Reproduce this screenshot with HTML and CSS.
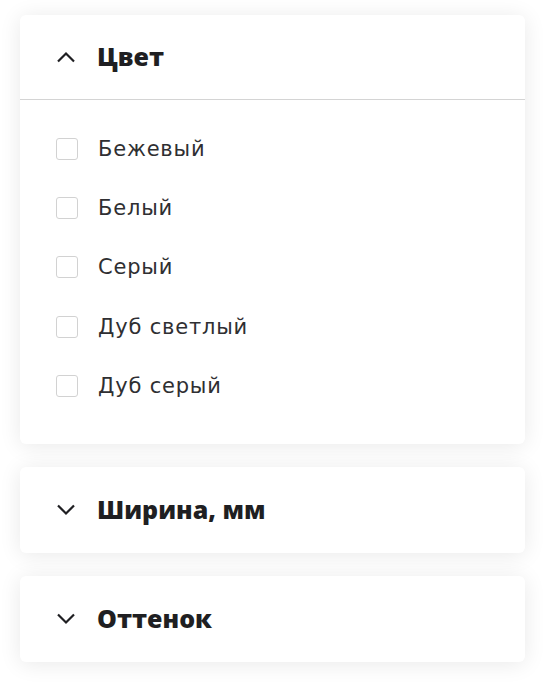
FILE: index.html
```html
<!DOCTYPE html>
<html lang="ru">
<head>
<meta charset="utf-8">
<link rel="stylesheet" href="styles.css">
</head>
<body>
<div class="filters">
  <section class="card">
    <div class="card-head open">
      <svg class="chev" width="20" height="12" viewBox="0 0 20 12"><path d="M2 10.5 L10 2.5 L18 10.5" fill="none" stroke="#1f1f22" stroke-width="2.2"/></svg>
      <h2 class="title">Цвет</h2>
    </div>
    <ul class="options">
      <li class="option"><span class="box"></span><span class="label">Бежевый</span></li>
      <li class="option"><span class="box"></span><span class="label">Белый</span></li>
      <li class="option"><span class="box"></span><span class="label">Серый</span></li>
      <li class="option"><span class="box"></span><span class="label">Дуб светлый</span></li>
      <li class="option"><span class="box"></span><span class="label">Дуб серый</span></li>
    </ul>
  </section>
  <section class="card">
    <div class="card-head">
      <svg class="chev" width="20" height="12" viewBox="0 0 20 12"><path d="M2 1.5 L10 9.5 L18 1.5" fill="none" stroke="#1f1f22" stroke-width="2.2"/></svg>
      <h2 class="title">Ширина, мм</h2>
    </div>
  </section>
  <section class="card">
    <div class="card-head">
      <svg class="chev" width="20" height="12" viewBox="0 0 20 12"><path d="M2 1.5 L10 9.5 L18 1.5" fill="none" stroke="#1f1f22" stroke-width="2.2"/></svg>
      <h2 class="title">Оттенок</h2>
    </div>
  </section>
</div>
</body>
</html>
```
FILE: styles.css
```css
* { box-sizing: border-box; }
html, body { margin: 0; padding: 0; background: #fff; }
body {
  font-family: "DejaVu Sans", sans-serif;
  color: #1f1f22;
  padding: 15px 0 28px 20px;
  min-height: 690px;
}
.filters {
  width: 505px;
  display: flex;
  flex-direction: column;
  gap: 23px;
}
.card {
  background: #fff;
  border-radius: 6px;
  box-shadow: 0 2px 22px rgba(0, 0, 0, 0.09);
}
.card-head {
  height: 86px;
  display: flex;
  align-items: center;
  padding-left: 36px;
  gap: 21px;
}
.card-head.open {
  height: 85px;
  border-bottom: 1px solid #d4d4d4;
}
.chev { display: block; flex: none; }
.title {
  margin: -3px 0 0;
  font-family: "Open Sans", sans-serif;
  font-size: 25px;
  font-weight: 800;
  letter-spacing: 0;
  color: #1f1f22;
}
.options {
  list-style: none;
  margin: 0;
  padding: 19px 0 29px 36px;
}
.option {
  height: 59.3px;
  display: flex;
  align-items: center;
  gap: 20px;
}
.box {
  width: 22px;
  height: 22px;
  border: 1px solid #d2d2d2;
  border-radius: 3px;
  flex: none;
}
.label {
  font-size: 21px;
  font-weight: 400;
  color: #2f2f32;
  letter-spacing: 0.8px;
}
```
